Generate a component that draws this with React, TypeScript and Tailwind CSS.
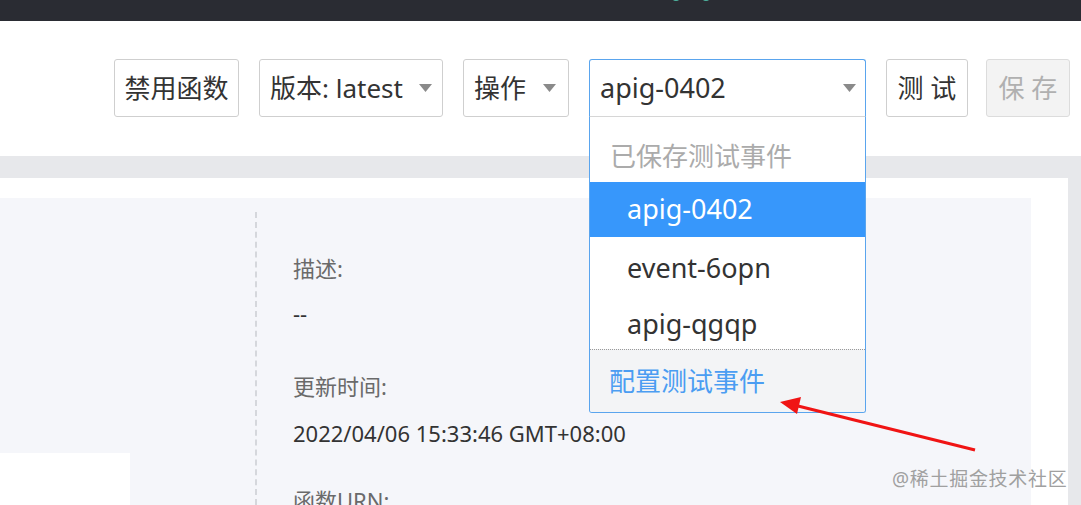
import React from "react";

const font = "font-['Noto_Sans','Noto_Sans_CJK_SC',sans-serif]";

function Caret({ className = "" }: { className?: string }) {
  return (
    <svg width="13" height="8" viewBox="0 0 13 8" className={className}>
      <path d="M0 0h13L6.5 8z" fill="#8a8a8a" />
    </svg>
  );
}

function ToolButton({
  children,
  disabled = false,
  className = "",
}: {
  children: React.ReactNode;
  disabled?: boolean;
  className?: string;
}) {
  return (
    <div
      className={
        "h-[58px] flex items-center rounded-[3px] border text-[26px] leading-none " +
        (disabled
          ? "bg-[#f3f3f3] border-[#dcdcdc] text-[#b0b0b0] "
          : "bg-white border-[#cfcfcf] text-[#333] ") +
        className
      }
    >
      {children}
    </div>
  );
}

function EventSelect() {
  const items = ["apig-0402", "event-6opn", "apig-qgqp"];
  return (
    <div className="relative w-[277px]">
      <div className="h-[58px] flex items-center justify-between pl-[10px] pr-[9px] bg-white border border-[#5aa5ee] border-b-[#d6d6d6] rounded-t-[3px] text-[27px] text-[#333]">
        <span>apig-0402</span>
        <Caret />
      </div>
      <div className="absolute z-10 top-full left-0 w-full bg-white border border-t-0 border-[#5aa5ee] rounded-b-[3px] overflow-hidden text-[26px]">
        <div className="h-[65px] flex items-center pt-[13px] pl-[20px] text-[#ababab]">已保存测试事件</div>
        {items.map((it, i) => (
          <div
            key={it}
            className={
              "flex items-center pl-[37px] text-[27px] " +
              (i === 0 ? "h-[55px] bg-[#3797fb] text-white" : "h-[56px] pt-[6px] text-[#333]")
            }
          >
            {it}
          </div>
        ))}
        <div className="border-t border-dotted border-[#9a9a9a] h-[63px] bg-[#f3f4f6] flex items-center pl-[19px] text-[#4b9df2]">
          配置测试事件
        </div>
      </div>
    </div>
  );
}

export default function App() {
  return (
    <div className={"relative w-[1081px] h-[505px] overflow-hidden bg-[#e7e8eb] " + font}>
      {/* top nav */}
      <div className="relative h-[21px] bg-[#2a2c33] overflow-hidden">
        <div className="absolute left-[672px] top-[-3px] flex gap-[22px]">
          <span className="block w-[8px] h-[4px] rounded-b bg-[#4fb5a0]" />
          <span className="block w-[8px] h-[4px] rounded-b bg-[#4fb5a0]" />
        </div>
      </div>

      {/* toolbar */}
      <div className="h-[135px] bg-white flex items-start justify-end gap-[20px] pt-[38px] pr-[11px]">
        <ToolButton className="w-[125px] justify-center">禁用函数</ToolButton>
        <ToolButton className="w-[184px] justify-between pl-[10px] pr-[10px]">
          <span>版本: latest</span>
          <Caret />
        </ToolButton>
        <ToolButton className="w-[106px] justify-between pl-[10px] pr-[12px]">
          <span>操作</span>
          <Caret />
        </ToolButton>
        <EventSelect />
        <div className="flex gap-[18px]">
          <ToolButton className="w-[82px] justify-center">测 试</ToolButton>
          <ToolButton disabled className="w-[84px] justify-center">
            保 存
          </ToolButton>
        </div>
      </div>

      {/* content */}
      <div className="mt-[22px] w-[1068px] h-[327px] bg-white pt-[20px] pr-[37px]">
        <div className="h-full bg-[#f5f6fa] flex">
          <div className="w-[257px] pt-[14px] flex">
            <div className="flex-1 border-r-2 border-dashed border-[#d5d7dc] pt-[241px]">
              <div className="w-[130px] h-[60px] bg-white" />
            </div>
          </div>
          <div className="pl-[36px] pt-[56px] text-[22px] leading-[28px]">
            <div className="text-[#6a6a6a]">描述:</div>
            <div className="mt-[17px] text-[#333]">--</div>
            <div className="mt-[45px] text-[#6a6a6a]">更新时间:</div>
            <div className="mt-[19px] text-[#333]">2022/04/06 15:33:46 GMT+08:00</div>
            <div className="mt-[39px] text-[#6a6a6a]">函数URN:</div>
          </div>
        </div>
      </div>

      {/* annotation arrow */}
      <svg className="absolute z-20 left-0 top-0 pointer-events-none" width="1081" height="505">
        <line x1="975" y1="450" x2="798" y2="406" stroke="#f01414" strokeWidth="3" />
        <path d="M780 402 L801 397 L797 414 Z" fill="#f01414" />
      </svg>

      {/* watermark */}
      <div className="absolute left-[892px] top-[465px] text-[19px] tracking-[0.7px] text-[#a0a0a0]">
        @稀土掘金技术社区
      </div>
    </div>
  );
}
